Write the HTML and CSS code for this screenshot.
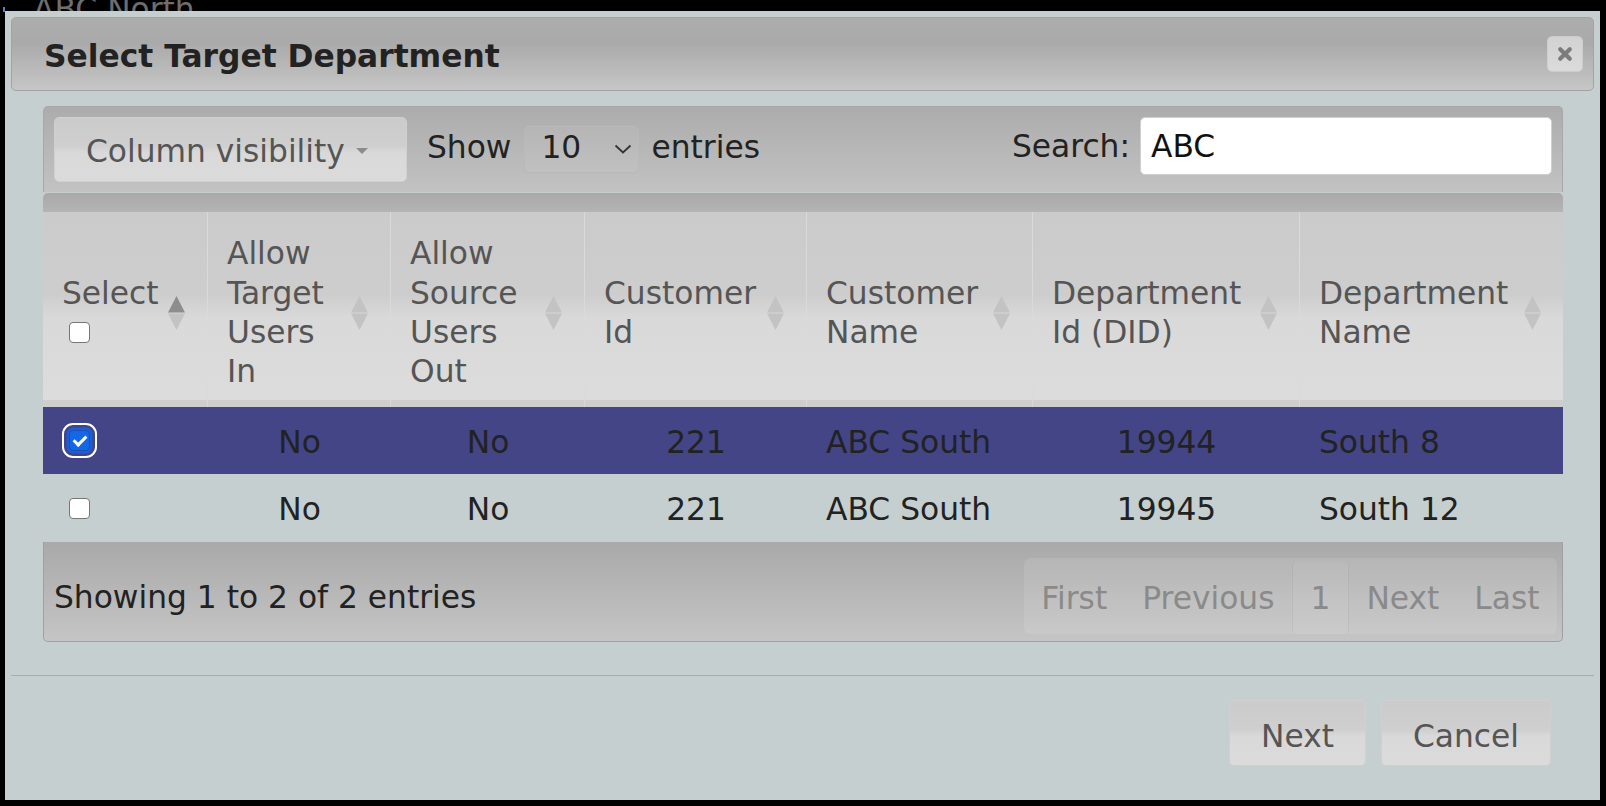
FILE: index.html
```html
<!DOCTYPE html>
<html lang="en">

<head>
    <meta charset="UTF-8">
    <title>Select Target Department</title>
    <link rel="stylesheet" href="styles.css">
</head>

<body>
    <!-- page behind the dialog, mostly hidden -->
    <div class="behind"><span class="tree-mark"></span>ABC North</div>

    <div class="dialog">
        <div class="dialog-title">
            <span class="dialog-title-text">Select Target Department</span>
            <button class="dialog-close" type="button" title="Close">
                <svg width="16" height="16" viewBox="0 0 16 16">
                    <path d="M3.2 3.2 L12.8 12.8 M12.8 3.2 L3.2 12.8" stroke="#7c7c7c" stroke-width="4.2" stroke-linecap="round" fill="none" />
                </svg>
            </button>
        </div>

        <div class="dialog-content">
            <div class="dt-wrapper">
                <div class="dt-toolbar">
                    <button class="ui-btn colvis" type="button">Column visibility<span class="caret"></span></button>
                    <div class="dt-length">
                        <span class="length-word">Show</span>
                        <div class="length-select">
                            <span>10</span>
                            <svg width="18" height="10" viewBox="0 0 18 10">
                                <polyline points="1.5,1.5 9,8.5 16.5,1.5" fill="none" stroke="#333" stroke-width="1.8" />
                            </svg>
                        </div>
                        <span class="length-word">entries</span>
                    </div>
                    <label class="dt-search">Search:<input type="text" value="ABC"></label>
                </div>
                <div class="dt-headbar"></div>

                <table class="dt-table">
                    <colgroup>
                        <col class="w-select">
                        <col class="w-target">
                        <col class="w-source">
                        <col class="w-custid">
                        <col class="w-custname">
                        <col class="w-deptid">
                        <col class="w-deptname">
                    </colgroup>
                    <thead>
                        <tr class="head-row">
                            <th>
                                <div class="th-in">
                                    <div class="th-label">Select
                                        <div class="th-check"><input type="checkbox" class="cb"></div>
                                    </div>
                                    <svg class="sort sort-asc" width="17" height="34" viewBox="0 0 17 34"><path class="up" d="M8.5 0 L17 16.5 H0 Z" /><path class="down" d="M0 17.5 H17 L8.5 34 Z" /></svg>
                                </div>
                            </th>
                            <th>
                                <div class="th-in">
                                    <div class="th-label">Allow Target Users In</div>
                                    <svg class="sort" width="17" height="34" viewBox="0 0 17 34"><path class="up" d="M8.5 0 L17 16.5 H0 Z" /><path class="down" d="M0 17.5 H17 L8.5 34 Z" /></svg>
                                </div>
                            </th>
                            <th>
                                <div class="th-in">
                                    <div class="th-label">Allow Source Users Out</div>
                                    <svg class="sort" width="17" height="34" viewBox="0 0 17 34"><path class="up" d="M8.5 0 L17 16.5 H0 Z" /><path class="down" d="M0 17.5 H17 L8.5 34 Z" /></svg>
                                </div>
                            </th>
                            <th>
                                <div class="th-in">
                                    <div class="th-label">Customer Id</div>
                                    <svg class="sort" width="17" height="34" viewBox="0 0 17 34"><path class="up" d="M8.5 0 L17 16.5 H0 Z" /><path class="down" d="M0 17.5 H17 L8.5 34 Z" /></svg>
                                </div>
                            </th>
                            <th>
                                <div class="th-in">
                                    <div class="th-label">Customer Name</div>
                                    <svg class="sort" width="17" height="34" viewBox="0 0 17 34"><path class="up" d="M8.5 0 L17 16.5 H0 Z" /><path class="down" d="M0 17.5 H17 L8.5 34 Z" /></svg>
                                </div>
                            </th>
                            <th>
                                <div class="th-in">
                                    <div class="th-label">Department Id (DID)</div>
                                    <svg class="sort" width="17" height="34" viewBox="0 0 17 34"><path class="up" d="M8.5 0 L17 16.5 H0 Z" /><path class="down" d="M0 17.5 H17 L8.5 34 Z" /></svg>
                                </div>
                            </th>
                            <th>
                                <div class="th-in">
                                    <div class="th-label">Department Name</div>
                                    <svg class="sort" width="17" height="34" viewBox="0 0 17 34"><path class="up" d="M8.5 0 L17 16.5 H0 Z" /><path class="down" d="M0 17.5 H17 L8.5 34 Z" /></svg>
                                </div>
                            </th>
                        </tr>
                        <tr class="head-sizer">
                            <td></td><td></td><td></td><td></td><td></td><td></td><td></td>
                        </tr>
                    </thead>
                    <tbody>
                        <tr class="row row-sel">
                            <td><input type="checkbox" class="cb cb-focus" checked></td>
                            <td class="center">No</td>
                            <td class="center">No</td>
                            <td class="center">221</td>
                            <td>ABC South</td>
                            <td class="center">19944</td>
                            <td>South 8</td>
                        </tr>
                        <tr class="row row-plain">
                            <td><input type="checkbox" class="cb"></td>
                            <td class="center">No</td>
                            <td class="center">No</td>
                            <td class="center">221</td>
                            <td>ABC South</td>
                            <td class="center">19945</td>
                            <td>South 12</td>
                        </tr>
                    </tbody>
                </table>

                <div class="dt-footer">
                    <div class="dt-info">Showing 1 to 2 of 2 entries</div>
                    <div class="dt-paging">
                        <span class="pg">First</span>
                        <span class="pg">Previous</span>
                        <span class="pg pg-current">1</span>
                        <span class="pg">Next</span>
                        <span class="pg">Last</span>
                    </div>
                </div>
            </div>
        </div>

        <div class="dialog-buttons">
            <button class="ui-btn" type="button">Next</button>
            <button class="ui-btn" type="button">Cancel</button>
        </div>
    </div>
</body>

</html>
```

FILE: styles.css
```css
* {
    box-sizing: border-box;
}

html,
body {
    margin: 0;
}

body {
    position: relative;
    height: 806px;
    overflow: hidden;
    padding: 11px 6px 0 5px;
    background: #000;
    font-family: "DejaVu Sans", Verdana, sans-serif;
    font-size: 31.3px;
    color: #222;
}

/* page content under the dialog */
.behind {
    position: absolute;
    left: 33px;
    top: -6px;
    line-height: 31px;
    color: #6e6e6e;
    white-space: nowrap;
}

.tree-mark {
    position: absolute;
    left: -30px;
    top: 13px;
    width: 2px;
    height: 5px;
    background: #4d82d4;
}

.dialog {
    position: relative;
    width: 1595px;
    height: 789px;
    padding: 6px;
    display: flex;
    flex-direction: column;
    background: #c5cfd0;
}

.dialog-title {
    flex: none;
    height: 74px;
    display: flex;
    align-items: center;
    justify-content: space-between;
    padding: 0 10px 0 32px;
    border: 1px solid #a3a3a3;
    border-radius: 5px;
    background: linear-gradient(#adadad, #aaaaaa 35%, #c6c6c6);
}

.dialog-title-text {
    margin-top: 4px;
    font-weight: bold;
    color: #222;
}

.dialog-close {
    width: 36px;
    height: 36px;
    padding: 0;
    display: flex;
    align-items: center;
    justify-content: center;
    border: 1px solid #cdcdcd;
    border-radius: 5px;
    background: linear-gradient(#d2d2d2, #dbdbdb);
}

.dialog-content {
    flex: 1;
    padding: 15px 31px 0 32px;
}

.ui-btn {
    font: inherit;
    color: #555;
    border: 1px solid #d0d0d0;
    border-radius: 5px;
    background: linear-gradient(#cbcbcb, #cfcfcf 45%, #d9d9d9 55%, #dbdbdb);
    cursor: pointer;
}

/* toolbar above the table */
.dt-toolbar {
    height: 86px;
    display: flex;
    align-items: flex-start;
    padding: 10px 10px 0 10px;
    border: 1px solid #a8a8a8;
    border-bottom: none;
    border-radius: 5px 5px 0 0;
    background: linear-gradient(#acacac, #c2c2c2);
}

.colvis {
    width: 353px;
    height: 65px;
    padding: 2px 0 0 31px;
    display: flex;
    align-items: center;
}

.caret {
    width: 0;
    height: 0;
    margin-left: 11px;
    border-left: 6px solid transparent;
    border-right: 6px solid transparent;
    border-top: 6px solid #8c8c8c;
}

.dt-length {
    height: 47px;
    margin: 9px 0 0 20px;
    display: flex;
    align-items: center;
}

.length-word {
    margin-bottom: 6px;
}

.length-select {
    width: 115px;
    height: 47px;
    margin: 0 12px 0 13px;
    padding: 0 6px 5px 16px;
    display: flex;
    align-items: center;
    justify-content: space-between;
    border: 1px solid #b9b9b9;
    border-radius: 5px;
    background: rgba(255, 255, 255, 0.06);
}

.length-select svg {
    margin-top: 4px;
}

.dt-search {
    margin-left: auto;
    height: 58px;
    display: flex;
    align-items: center;
}

.dt-search input {
    width: 412px;
    height: 58px;
    margin-left: 10px;
    padding: 0 10px;
    font: inherit;
    color: #111;
    border: 1px solid #cfcfcf;
    border-radius: 5px;
    background: #fff;
    outline: none;
}

.dt-headbar {
    height: 19px;
    margin-top: 1px;
    border-radius: 5px 5px 0 0;
    background: linear-gradient(#a9a9a9, #b4b4b4);
}

/* table */
.dt-table {
    width: 1520px;
    table-layout: fixed;
    border-collapse: separate;
    border-spacing: 0;
}

.w-select { width: 165px; }
.w-target { width: 183px; }
.w-source { width: 194px; }
.w-custid { width: 222px; }
.w-custname { width: 226px; }
.w-deptid { width: 267px; }
.w-deptname { width: 263px; }

.head-row {
    height: 188px;
}

.head-row th {
    padding: 22px 0 8px 19px;
    text-align: left;
    vertical-align: middle;
    font-weight: normal;
    line-height: 39.3px;
    color: #555;
    border-right: 1px solid #dadada;
    background: linear-gradient(#cbcbcb, #cdcdcd 44%, #d9d9d9 56%, #dcdcdc);
}

.th-in {
    display: flex;
    align-items: center;
    padding-right: 22px;
}

.th-label {
    flex: 1;
}

.th-check {
    height: 39.3px;
    display: flex;
    align-items: center;
}

.sort {
    flex: none;
    display: block;
    margin-left: 6px;
}

.sort path {
    fill: #c3c3c3;
}

.sort-asc .up {
    fill: #8d8d8d;
}

.head-sizer td {
    height: 7px;
    padding: 0;
    font-size: 0;
    line-height: 0;
    border-right: 1px solid #d8d8d8;
    background: #cecece;
}

.head-row th:last-child,
.head-sizer td:last-child {
    border-right: none;
}

.row td {
    padding: 2px 19px 0;
    vertical-align: middle;
    white-space: nowrap;
    color: #222;
}

.row-sel {
    height: 67px;
    background: #434587;
}

.row-plain {
    height: 68px;
}

.center {
    text-align: center;
}

/* checkboxes */
.cb {
    -webkit-appearance: none;
    appearance: none;
    position: relative;
    display: block;
    width: 21px;
    height: 21px;
    margin: 0 0 0 7px;
    border: 1.5px solid #767676;
    border-radius: 4px;
    background: #fff;
}

.row .cb {
    margin-top: -2px;
}

.cb:checked {
    background: #1468e8;
    border-color: #1d4fb5;
}

.cb:checked::after {
    content: "";
    position: absolute;
    left: 5.5px;
    top: 1.5px;
    width: 5px;
    height: 10px;
    border: solid #fff;
    border-width: 0 3px 3px 0;
    transform: rotate(45deg);
}

.cb-focus {
    box-shadow: 0 0 0 2.5px #1a5fd6;
    outline: 2px solid #fff;
    outline-offset: 5px;
}

/* footer */
.dt-footer {
    height: 100px;
    display: flex;
    justify-content: space-between;
    padding: 0 5px 0 10px;
    border: 1px solid #a0a0a0;
    border-top: none;
    border-radius: 0 0 5px 5px;
    background: linear-gradient(#a9a9a9, #c5c5c5);
}

.dt-info {
    align-self: center;
    margin-top: 10px;
}

.dt-paging {
    height: 76px;
    margin-top: 16px;
    padding-top: 4px;
    display: flex;
    border-radius: 6px;
    color: #8a8a8a;
    background: rgba(255, 255, 255, 0.1);
}

.pg {
    display: flex;
    align-items: center;
    padding: 0 17.5px;
}

.pg-current {
    border-left: 1px solid rgba(0, 0, 0, 0.05);
    border-right: 1px solid rgba(0, 0, 0, 0.05);
    border-radius: 4px;
    background: rgba(255, 255, 255, 0.05);
}

/* dialog buttons */
.dialog-buttons {
    flex: none;
    height: 119px;
    display: flex;
    justify-content: flex-end;
    align-items: flex-start;
    gap: 15px;
    padding: 24px 43px 0 0;
    border-top: 1px solid #a6adae;
}

.dialog-buttons .ui-btn {
    height: 66px;
    padding: 5px 31px 0;
}
```
